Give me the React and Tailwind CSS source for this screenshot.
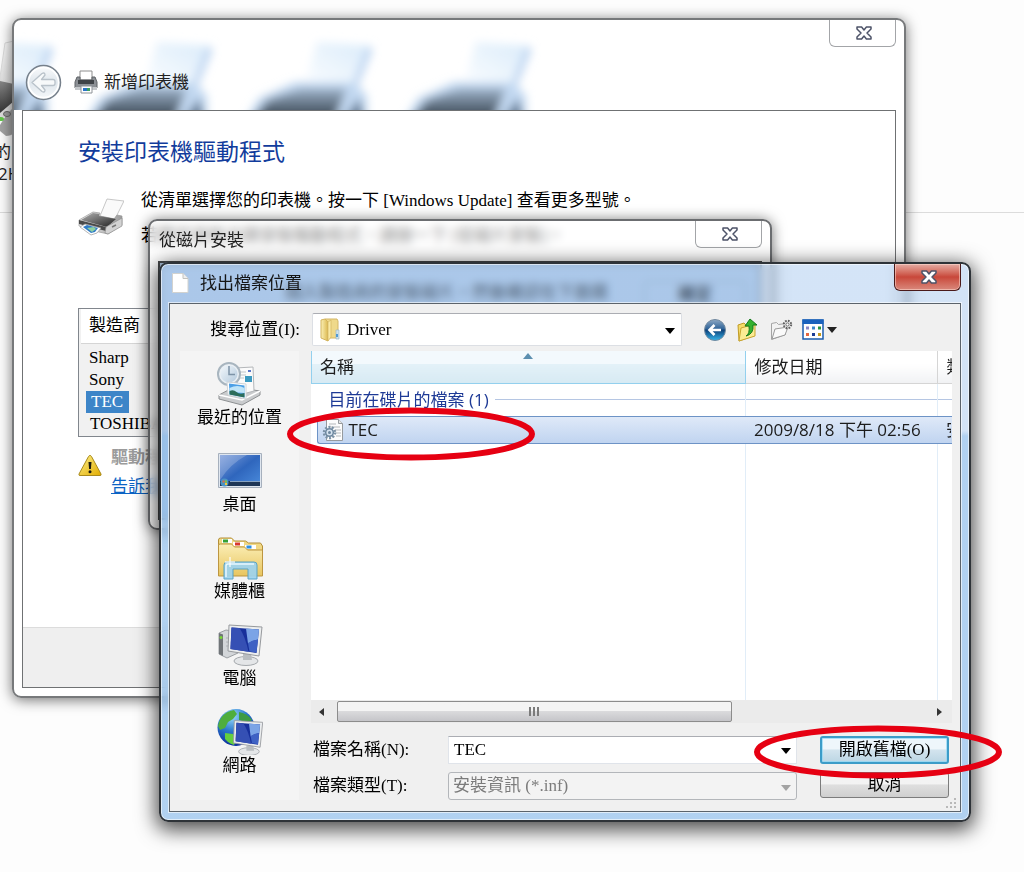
import React from 'react';

const serif = "font-['Liberation_Serif','Noto_Sans_CJK_TC',serif]";
const sans = "font-['Open_Sans','Noto_Sans_CJK_TC',sans-serif]";

function CloseGlyph({ tone = '#4d5368' }) {
  return (
    <svg width="18" height="16" viewBox="0 0 18 16" aria-hidden="true">
      <path
        d="M2 2h4.6L9 4.900 11.400 2H16v2L12 8l4 4v2h-4.600L9 11.100 6.600 14H2v-2l4-4-4-4z"
        fill="#fff"
        stroke={tone}
        strokeWidth="1.500"
        strokeLinejoin="round"
      />
    </svg>
  );
}

function CloseButton({ active }) {
  return (
    <button
      aria-label="關閉"
      className={
        active
          ? 'flex h-[27px] w-[67px] items-center justify-center rounded-b-md border border-t-0 border-[#4a1a1a] bg-linear-to-b from-[#e4aca4] from-0% via-[#c8473a] via-50% to-[#d9887c] pl-[2px] shadow-[inset_0_0_0_1px_rgba(255,220,210,0.55)]'
          : 'flex h-[27px] w-[67px] items-center justify-center rounded-b-md border border-t-0 border-[#a3a5a8] bg-white pl-[2px]'
      }
    >
      <CloseGlyph />
    </button>
  );
}

function DeskPrinter() {
  return (
    <svg width="14" height="100" viewBox="0 0 14 100" aria-hidden="true">
      <defs>
        <linearGradient id="dp1" x1="0" y1="0" x2="0" y2="1">
          <stop offset="0" stopColor="#888" />
          <stop offset="1" stopColor="#2f2f2f" />
        </linearGradient>
        <linearGradient id="dp2" x1="0" y1="0" x2="0" y2="1">
          <stop offset="0" stopColor="#fafafa" />
          <stop offset="1" stopColor="#dedede" />
        </linearGradient>
      </defs>
      <path d="M5 2l9-2v44H0V36z" fill="url(#dp2)" stroke="#dcdcdc" />
      <path d="M0 40l14 3v24L0 74z" fill="url(#dp1)" />
      <path d="M0 84l14-22v30q-3 3-8 3L0 90z" fill="#a2a2a2" />
      <path d="M0 72l14-12v6L0 80z" fill="#dcdcdc" />
      <ellipse cx="7" cy="73" rx="3.500" ry="2.500" fill="#9b9b9b" stroke="#666" />
      <ellipse cx="1" cy="78" rx="3" ry="2" fill="#63c64a" />
    </svg>
  );
}

function GlassPrinters() {
  return (
    <svg className="absolute inset-0 h-full w-full" aria-hidden="true">
      <defs>
        <filter id="soft" x="-30%" y="-30%" width="160%" height="160%">
          <feGaussianBlur stdDeviation="5" />
        </filter>
        <linearGradient id="gp" x1="0" y1="0" x2="0" y2="1">
          <stop offset="0" stopColor="#9fb4cb" />
          <stop offset="1" stopColor="#1f2a34" />
        </linearGradient>
        <linearGradient id="gpp" x1="1" y1="0" x2="0" y2="1">
          <stop offset="0" stopColor="#d9ebfa" />
          <stop offset="1" stopColor="#fbfdff" />
        </linearGradient>
        <g id="gprinter" filter="url(#soft)">
          <path d="M66 22L120 26L100 66L54 66z" fill="url(#gpp)" />
          <path d="M119 28L102 70" stroke="#aecbee" strokeWidth="5" />
          <path d="M-8 104L8 78L44 62H104L116 76V104z" fill="#c3d9f2" />
          <path d="M-2 104L16 80L50 68H96L82 104z" fill="url(#gp)" />
          <path d="M90 104L108 78L114 104z" fill="#5f7690" />
        </g>
      </defs>
      <use href="#gprinter" x="-82" y="0" />
      <use href="#gprinter" x="77" y="0" />
      <use href="#gprinter" x="237" y="0" />
      <use href="#gprinter" x="396" y="0" />
    </svg>
  );
}

function BackCircle() {
  return (
    <svg width="37" height="37" viewBox="0 0 37 37" aria-hidden="true">
      <defs>
        <linearGradient id="bc" x1="0" y1="0" x2="0" y2="1">
          <stop offset="0" stopColor="#fbfcfd" />
          <stop offset="0.5" stopColor="#dfe6ec" />
          <stop offset="1" stopColor="#f6f9fb" />
        </linearGradient>
      </defs>
      <circle cx="18.500" cy="18.500" r="17" fill="url(#bc)" stroke="#76808b" strokeWidth="1.500" />
      <circle cx="18.500" cy="18.500" r="15" fill="none" stroke="#fff" strokeWidth="1.500" />
      <path
        d="M7 18.500L17 9.500q3-1.500 3 1.500l-3.500 4.500H28q2 0 2 2v2q0 2-2 2H16.500l3.500 4.500q0 3-3 1.500z"
        fill="#f7f9fa"
        stroke="#b9c2ca"
        strokeWidth="1.300"
        strokeLinejoin="round"
      />
    </svg>
  );
}

function SmallPrinter() {
  return (
    <svg width="24" height="24" viewBox="0 0 24 24" aria-hidden="true">
      <path d="M6 1h12v9H6z" fill="#fff" stroke="#8d8d8d" />
      <path d="M3 7h3v3h12V7h3l2 5v6H1v-6z" fill="#8b8f94" stroke="#5e6266" />
      <path d="M4 10h16v4H4z" fill="#3f4347" />
      <path d="M1 17h22v3H1z" fill="#c5c8cb" />
      <path d="M7 16h11v7H7z" fill="#fff" stroke="#8d9298" />
      <path d="M9 18h4v3H9z" fill="#2a73c8" />
      <path d="M13 18h3v3h-3z" fill="#3b9f62" />
    </svg>
  );
}

function BigPrinter() {
  return (
    <svg width="46" height="38" viewBox="0 0 46 38" aria-hidden="true">
      <defs>
        <linearGradient id="bp1" x1="0" y1="0" x2="1" y2="1">
          <stop offset="0" stopColor="#b2b2b2" />
          <stop offset="1" stopColor="#1f1f1f" />
        </linearGradient>
        <linearGradient id="bp2" x1="0" y1="0" x2="1" y2="0">
          <stop offset="0" stopColor="#f2f2f2" />
          <stop offset="1" stopColor="#9b9b9b" />
        </linearGradient>
      </defs>
      <path d="M29 1l17 2-9 18-15-3z" fill="#fafafa" stroke="#b9b9b9" strokeWidth=".8" />
      <path d="M1 22l14-8 7 1-1 3 15 3 3-4 5 1v9L30 36l-9-2-20-6z" fill="url(#bp2)" stroke="#9a9a9a" strokeWidth=".7" />
      <path d="M3 22l12-7 6 1v2l17 3-9 8z" fill="url(#bp1)" />
      <path d="M1 22l27 7v4L1 26z" fill="#4a4a4a" />
      <path d="M28 29l16-9v8L30 36l-3-1z" fill="#d3d3d3" stroke="#8e8e8e" strokeWidth=".7" />
      <path d="M2 29l5-3 16 4-4 5-6 2z" fill="#fff" stroke="#999" strokeWidth=".7" />
      <path d="M5 29l4-2 11 3-3 4-4 1z" fill="#2f7bc6" />
      <path d="M9 30l7-1 2 2-4 3z" fill="#8ed0a0" />
      <path d="M34 29l4-2" stroke="#777" strokeWidth="1.500" />
    </svg>
  );
}

function WarningIcon() {
  return (
    <svg width="24" height="23" viewBox="0 0 24 23" aria-hidden="true">
      <defs>
        <linearGradient id="wi" x1="0" y1="0" x2="1" y2="1">
          <stop offset="0" stopColor="#fdf08b" />
          <stop offset="1" stopColor="#e2ac00" />
        </linearGradient>
      </defs>
      <path d="M12 1.500q1 0 1.500 1L23 20q.5 1.500-1 1.500H2Q.5 21.500 1 20L10.500 2.500q.5-1 1.500-1z" fill="url(#wi)" stroke="#a98a1c" />
      <path d="M10.500 8h3l-.6 7h-1.800z" fill="#1c1a10" />
      <circle cx="12" cy="17.800" r="1.500" fill="#1c1a10" />
    </svg>
  );
}

function RecentIcon() {
  return (
    <svg width="46" height="46" viewBox="0 0 46 46" aria-hidden="true">
      <defs>
        <linearGradient id="ri" x1="0" y1="0" x2="1" y2="1">
          <stop offset="0" stopColor="#f2f7fb" />
          <stop offset="1" stopColor="#b4cadd" />
        </linearGradient>
      </defs>
      <path d="M2 34l15-8 26 4v4L25 44 2 38z" fill="#c9cbcd" stroke="#8d9092" />
      <path d="M2 34l23 5 18-9" fill="none" stroke="#fff" strokeWidth="1.500" />
      <path d="M18 7l18-1 1 24-15 4z" fill="#fbfbfb" stroke="#b4b7ba" />
      <path d="M21 11h8M21 14h8M21 17h6" stroke="#c1c5ca" />
      <path d="M28 15h7v6h-7z" fill="#3c9ac0" />
      <path d="M31 9h3v2h-3z" fill="#5b76c8" />
      <circle cx="12" cy="13" r="11" fill="#e9eff4" stroke="#a8b5bf" strokeWidth="2" />
      <circle cx="12" cy="13" r="8.500" fill="url(#ri)" />
      <path d="M12 5v8.500h6" fill="none" stroke="#7d93a7" strokeWidth="1.500" />
      <path d="M10 21l19 2v15l-18-4z" fill="#fff" stroke="#cfd4d8" />
      <path d="M12 22.500l15.500 2v12l-15-3z" fill="#4c9fe6" />
      <path d="M12.500 27q8-4 15 0v5l-15-1z" fill="#bfe4f8" />
      <path d="M12.500 30q4-2 7 1t8 1v4.500l-15-3z" fill="#2d6d5a" />
    </svg>
  );
}

function DesktopIcon() {
  return (
    <svg width="46" height="46" viewBox="0 0 46 46" aria-hidden="true">
      <defs>
        <linearGradient id="di" x1="0" y1="0" x2="1" y2="1">
          <stop offset="0" stopColor="#7d9ddb" />
          <stop offset="0.5" stopColor="#2f66bd" />
          <stop offset="1" stopColor="#4a8bdc" />
        </linearGradient>
      </defs>
      <path d="M1.500 5.500h43v34h-43z" fill="#dfe6ef" stroke="#a6b0bd" />
      <path d="M3 7h40v31H3z" fill="url(#di)" />
      <path d="M3 7h27Q13 16 3 32z" fill="#fff" opacity=".2" />
      <path d="M3 33h40v5H3z" fill="#1e3656" />
      <path d="M13 33.500h30" stroke="#87a2c0" />
      <circle cx="7.500" cy="34.500" r="4" fill="#4b93c4" />
      <path d="M5.500 32.500h2v2h-2z" fill="#e9683b" />
      <path d="M8 32.500h2v2H8z" fill="#87c53e" />
      <path d="M8 35h2v2H8z" fill="#f3ca3e" />
    </svg>
  );
}

function LibraryIcon() {
  return (
    <svg width="46" height="46" viewBox="0 0 46 46" aria-hidden="true">
      <defs>
        <linearGradient id="li" x1="0" y1="0" x2="0" y2="1">
          <stop offset="0" stopColor="#fbeeb5" />
          <stop offset="1" stopColor="#e8c55f" />
        </linearGradient>
      </defs>
      <path d="M1.500 5q0-2 2-2h11l3 3h11l3 2h12l2 3v26h-44z" fill="#f1d884" stroke="#b48f38" />
      <path d="M5 4h10v4H5z" fill="#fff" />
      <path d="M6 4.500h5v3H6z" fill="#35a135" />
      <path d="M16 7h11v4H16z" fill="#fff" />
      <path d="M18 7.500h5v3h-5z" fill="#d83a2f" />
      <path d="M28 10h11v4H28z" fill="#fff" />
      <path d="M29.500 10.500h5v3h-5z" fill="#2e8fe0" />
      <path d="M1.500 10q0-1 2-1h11l3 3h10l3 3h15v26h-44z" fill="url(#li)" stroke="#bd9640" />
      <path d="M7 44V30q0-3 3-3h27q3 0 3 3v14h-9V34H16v10z" fill="#9ed3ee" stroke="#4f9fc9" opacity=".93" />
      <path d="M9 42V31q0-2 2-2h26" fill="none" stroke="#e8f8ff" strokeWidth="1.500" />
      <path d="M13 22v10M8 27h10" stroke="#fff" strokeWidth="1.500" opacity=".8" />
    </svg>
  );
}

function Monitor() {
  return (
    <g>
      <ellipse cx="29" cy="39" rx="12" ry="4.500" fill="#e4e6e8" stroke="#a5a9ad" />
      <path d="M26 32h8l1 6h-9z" fill="#b9bdc1" />
      <path d="M12 3l33 2-3 29-31-5z" fill="#eceeef" stroke="#96999d" />
      <path d="M14.500 5.500l27.500 2-2.500 23.500-26-4z" fill="#17309b" />
      <path d="M14.500 5.500l8 .6q6 9 9 23.700l-18-2.800z" fill="#3550b4" />
      <path d="M29 6.500l13 1-1 10q-6 1-10 4z" fill="#7ba4e6" />
      <path d="M31 21q4-3 10-3.500l-1.500 13-7-1z" fill="#3f62c4" />
    </g>
  );
}

function ComputerIcon() {
  return (
    <svg width="46" height="46" viewBox="0 0 46 46" aria-hidden="true">
      <path d="M2 11l7-3 12 2v21l-11 5-8-4z" fill="#d3d6d9" stroke="#9b9fa3" />
      <path d="M2 11l4 1.500V34l-4-2z" fill="#707478" />
      <circle cx="4" cy="15.500" r="1.500" fill="#78d637" />
      <path d="M9 16h5M9 20h4M9 24h4" stroke="#aeb2b6" />
      <Monitor />
    </svg>
  );
}

function NetworkIcon() {
  return (
    <svg width="46" height="46" viewBox="0 0 46 46" aria-hidden="true">
      <defs>
        <radialGradient id="ni" cx=".4" cy=".2" r=".8">
          <stop offset="0" stopColor="#9adcfc" />
          <stop offset="0.5" stopColor="#2a77cd" />
          <stop offset="1" stopColor="#0c2d9b" />
        </radialGradient>
      </defs>
      <circle cx="19" cy="18.500" r="18.500" fill="url(#ni)" />
      <path d="M4 9Q9 2 17 1l3 4-4 5-5 3-3 6-5 2-2-4q1-5 3-8z" fill="#4fae3d" />
      <path d="M8 24l8 1 4 5-3 6q-6-2-9-6z" fill="#64cf3e" />
      <path d="M22 3q8 1 13 8l-5 3-8-3z" fill="#3f9b45" />
      <g transform="translate(7 9) scale(.86)">
        <Monitor />
      </g>
    </svg>
  );
}

function PageIcon() {
  return (
    <svg width="18" height="20" viewBox="0 0 18 20" aria-hidden="true">
      <path d="M1.500.5h10.500l5 5v14h-15.500z" fill="#fff" stroke="#d2d2cf" />
      <path d="M12 .5v5h5" fill="#eee" stroke="#c2c2be" />
    </svg>
  );
}

function FolderIcon() {
  return (
    <svg width="20" height="24" viewBox="0 0 20 24" aria-hidden="true">
      <defs>
        <linearGradient id="fo" x1="0" y1="0" x2="1" y2="0">
          <stop offset="0" stopColor="#fbf0b4" />
          <stop offset="1" stopColor="#dcb950" />
        </linearGradient>
      </defs>
      <path d="M5 1h12l1 2v17H5z" fill="#efd98a" stroke="#d3b667" />
      <path d="M16 12h3v9h-3z" fill="#cfe3ee" stroke="#9bb9c9" strokeWidth=".7" />
      <path d="M16 16h2v3h-2z" fill="#4f9bd5" />
      <path d="M1 2l4-1 3 3v19l-7-3z" fill="url(#fo)" stroke="#d3b45e" />
      <path d="M8 4l3-2v17l-3 4z" fill="#f9e9a4" stroke="#d3b45e" strokeWidth=".7" />
    </svg>
  );
}

function InfIcon() {
  return (
    <svg width="22" height="24" viewBox="0 0 22 24" aria-hidden="true">
      <path d="M4.500 1.500h12l4 4v17h-16z" fill="#fcfcfc" stroke="#969a9e" />
      <path d="M16.500 1.500v4h4" fill="#e6e6e6" stroke="#969a9e" />
      <path d="M7 6h7M7 9h11M13 12h6M14 15h5M14 18h5" stroke="#b5b8bb" />
      <circle cx="7.500" cy="14.500" r="5.500" fill="none" stroke="#7b91a5" strokeWidth="2.500" strokeDasharray="2 1.450" />
      <circle cx="7.500" cy="14.500" r="3.800" fill="#d6e3ef" stroke="#6c869e" strokeWidth="1.500" />
      <circle cx="7.500" cy="14.500" r="1.500" fill="#6c869e" />
    </svg>
  );
}

function BackNavIcon() {
  return (
    <svg width="24" height="24" viewBox="0 0 24 24" aria-hidden="true">
      <defs>
        <linearGradient id="bn" x1="0" y1="0" x2="0" y2="1">
          <stop offset="0" stopColor="#8ea9c4" />
          <stop offset="0.45" stopColor="#2f6398" />
          <stop offset="0.5" stopColor="#0d4079" />
          <stop offset="1" stopColor="#35b5ea" />
        </linearGradient>
      </defs>
      <circle cx="12" cy="12" r="10.500" fill="url(#bn)" stroke="#71899f" />
      <path d="M11.500 7L6.500 12l5 5M7 12h11" fill="none" stroke="#fff" strokeWidth="2.600" />
    </svg>
  );
}

function UpFolderIcon() {
  return (
    <svg width="24" height="24" viewBox="0 0 24 24" aria-hidden="true">
      <path d="M2 7l6-2 2 2 7-2v13L3 23z" fill="#f5dc6a" stroke="#c19b25" />
      <path d="M5 10l14-4v12L3 23z" fill="#fbeb93" stroke="#c8a531" />
      <path d="M10 18q4-2 3-10H9l5-7 7 6h-4q1 9-7 11z" fill="#35b22f" stroke="#157a1c" strokeLinejoin="round" />
    </svg>
  );
}

function NewFolderIcon() {
  return (
    <svg width="24" height="24" viewBox="0 0 24 24" aria-hidden="true">
      <path d="M2.500 5.500l5-1 2 2 7-1v11l-14 5z" fill="#f2f2f2" stroke="#a4a4a4" />
      <path d="M6 11l13-2-3 8-13 4z" fill="#fafafa" stroke="#9a9a9a" strokeLinejoin="round" />
      <circle cx="18.500" cy="6.500" r="3.700" fill="#f0f0f0" stroke="#5f5f5f" strokeWidth="2" strokeDasharray="1.700 1.200" />
      <circle cx="18.500" cy="6.500" r="1.600" fill="#fff" stroke="#6b6b6b" />
    </svg>
  );
}

function ViewsIcon() {
  return (
    <svg width="22" height="22" viewBox="0 0 22 22" aria-hidden="true">
      <path d="M1 1h20v19H1z" fill="#fff" stroke="#1a5cae" strokeWidth="1.500" />
      <path d="M.5.500h21V5H.5z" fill="#1a62bd" />
      <path d="M4 7.500h3v3H4z" fill="#8b87c6" />
      <path d="M10 7.500h3v3h-3z" fill="#3a87c8" />
      <path d="M16 7.500h3v3h-3z" fill="#25953e" />
      <path d="M4 14h3v3H4z" fill="#e5663e" />
      <path d="M10 14h3v3h-3z" fill="#1c3d94" />
      <path d="M16 14h3v3h-3z" fill="#c79b1c" />
    </svg>
  );
}

function Caret({ className }) {
  return (
    <svg width="10" height="6" viewBox="0 0 10 6" className={className} aria-hidden="true">
      <path d="M0 0h10L5 6z" fill="currentColor" />
    </svg>
  );
}

function AddPrinterWindow() {
  return (
    <section className="absolute left-[12px] top-[18px] flex h-[680px] w-[894px] flex-col rounded-[9px] border-2 border-[#77797b] bg-white/95 px-[8px] pb-[8px] shadow-[0_2px_14px_rgba(0,0,0,0.55)]">
      <header className="relative -mx-[8px] flex h-[90px] shrink-0 items-start overflow-hidden rounded-t-[7px] pl-[11px] pr-[8px]">
        <GlassPrinters />
        <button aria-label="上一頁" className="relative mt-[44px]">
          <BackCircle />
        </button>
        <h1 className={`relative ml-[12px] mt-[50px] flex items-center gap-[6px] text-[17px] leading-[24px] text-[#222] ${sans}`}>
          <SmallPrinter />
          新增印表機
        </h1>
        <div className="relative ml-auto">
          <CloseButton />
        </div>
      </header>
      <div className="flex min-h-0 flex-1 flex-col border border-[#6f7173] bg-white">
        <div className="flex-1 px-[55px] pt-[24px]">
          <h2 className={`text-[23px] leading-[32px] text-[#123c9c] ${sans}`}>安裝印表機驅動程式</h2>
          <div className="mt-[22px] flex gap-[17px]">
            <div className="pt-[9px]">
              <BigPrinter />
            </div>
            <div className={`text-[17px] leading-[24px] text-black ${serif}`}>
              <p>從清單選擇您的印表機。按一下 [Windows Update] 查看更多型號。</p>
              <p className="mt-[11px]">若要從安裝光碟安裝驅動程式，請按一下 [從磁片安裝]。</p>
            </div>
          </div>
          <div className={`mt-[60px] w-[300px] border border-[#81868d] bg-[#f1f1f1] px-[2px] pb-px text-[17px] leading-[22px] text-black ${serif}`}>
            <div className="border-b border-[#d5d5d5] bg-white px-[8px] py-[5px] leading-[24px]">製造商</div>
            <ul className="pt-[3px]">
              <li className="px-[8px]">Sharp</li>
              <li className="px-[8px]">Sony</li>
              <li className="ml-[5px] w-[43px] bg-[#3d85c8] pl-[5px] text-white">TEC</li>
              <li className="px-[9px]">TOSHIBA</li>
            </ul>
          </div>
          <div className={`mt-[10px] flex gap-[9px] text-[17px] ${serif}`}>
            <div className="pt-[7px]">
              <WarningIcon />
            </div>
            <div>
              <p className="font-bold leading-[22px] text-[#9b9b9b]">驅動程式沒有數位簽章</p>
              <a href="#signing" className="mt-[6px] block leading-[24px] text-[#0b63c4] underline">
                告訴我為什麼驅動程式簽章很重要
              </a>
            </div>
          </div>
        </div>
        <footer className="h-[60px] border-t border-[#dcdcdc] bg-[#efefef]" />
      </div>
    </section>
  );
}

function DiskWindow() {
  return (
    <section className="absolute left-[148px] top-[219px] flex h-[311px] w-[624px] flex-col rounded-[9px] border-2 border-[#6b6d70] bg-white/50 px-[8px] pb-[8px] shadow-[0_1px_14px_rgba(0,0,0,0.55)] backdrop-blur-[5px]">
      <header className="flex h-[40px] shrink-0 items-start justify-between pl-px">
        <h2 className={`pt-[7px] text-[17px] leading-[24px] text-[#222] ${sans}`}>從磁片安裝</h2>
        <CloseButton />
      </header>
      <div className={`flex flex-1 justify-between border-2 border-[#47494b] bg-[#b4cbe6] pl-[125px] pr-[14px] pt-[18px] text-[17px] leading-[24px] text-black ${serif}`}>
        <p>插入製造商的安裝磁片，然後確認在下面選</p>
        <button className="h-[28px] w-[102px] rounded-[3px] border border-[#8a97a8] font-bold">確定</button>
      </div>
    </section>
  );
}

const places = [
  { name: '最近的位置', Icon: RecentIcon },
  { name: '桌面', Icon: DesktopIcon },
  { name: '媒體櫃', Icon: LibraryIcon },
  { name: '電腦', Icon: ComputerIcon },
  { name: '網路', Icon: NetworkIcon },
];

function PlacesBar() {
  return (
    <nav className="w-[119px] shrink-0 bg-[#f4f4f4] pb-[22px] pt-[10px]">
      <ul className="flex flex-col gap-[21px]">
        {places.map(({ name, Icon }) => (
          <li key={name}>
            <button className={`flex w-full flex-col items-center text-[17px] leading-[20px] text-black ${sans}`}>
              <Icon />
              {name}
            </button>
          </li>
        ))}
      </ul>
    </nav>
  );
}

function FileList() {
  return (
    <div className="flex min-h-0 flex-1 flex-col bg-white">
      <table className={`h-full w-full table-fixed border-collapse text-left text-[17px] text-[#1c1c1c] ${sans}`}>
        <colgroup>
          <col />
          <col className="w-[192px]" />
          <col className="w-[15px]" />
        </colgroup>
        <thead>
          <tr className="h-[32px]">
            <th className="relative border-b border-l border-r border-[#93d0ee] bg-linear-to-b from-[#f3f9fd] from-40% via-[#e3f1f8] via-41% to-[#d7eaf3] pl-[8px] font-normal">
              名稱
              <svg width="10" height="6" viewBox="0 0 10 6" className="absolute left-1/2 top-[2px] -translate-x-1/2" aria-hidden="true">
                <path d="M0 6h10L5 0z" fill="#5c8fb0" />
              </svg>
            </th>
            <th className="border-b border-r border-[#d5d5d5] bg-linear-to-b from-white from-40% to-[#f1f2f4] pl-[9px] font-normal">修改日期</th>
            <th className="overflow-hidden whitespace-nowrap border-b border-[#d5d5d5] bg-linear-to-b from-white from-40% to-[#f1f2f4] p-0 font-normal">
              <div className="ml-[9px] w-[5px] overflow-hidden">類型</div>
            </th>
          </tr>
        </thead>
        <tbody>
          <tr className="h-[33px]">
            <td className="border-r border-[#e1edf8] p-0 pl-[17px]">
              <div className="flex items-center gap-[6px] whitespace-nowrap leading-[24px] text-[#1e3a96]">
                目前在碟片的檔案 (1)
                <span className="h-px flex-1 bg-[#b5c6e3]" />
              </div>
            </td>
            <td className="border-r border-[#e1edf8] p-0">
              <div className="h-px bg-[#b5c6e3]" />
            </td>
            <td className="p-0">
              <div className="h-px bg-[#b5c6e3]" />
            </td>
          </tr>
          <tr className="h-[28px]">
            <td className="p-0 pl-[5px]">
              <div className="flex h-[28px] items-center gap-[5px] rounded-l-[3px] border-y border-l border-[#6d93c6] bg-linear-to-b from-[#dfe9f8] to-[#c0d4f0] pl-[4px]">
                <InfIcon />
                TEC
              </div>
            </td>
            <td className="p-0">
              <div className="flex h-[28px] items-center whitespace-nowrap border-y border-[#6d93c6] bg-linear-to-b from-[#dfe9f8] to-[#c0d4f0] pl-[9px]">
                2009/8/18 下午 02:56
              </div>
            </td>
            <td className="p-0">
              <div className="flex h-[28px] items-center border-y border-[#6d93c6] bg-linear-to-b from-[#dfe9f8] to-[#c0d4f0] pl-[9px]">
                <span className="w-[5px] overflow-hidden whitespace-nowrap">安裝資訊</span>
              </div>
            </td>
          </tr>
          <tr>
            <td className="border-r border-[#e1edf8]" />
            <td className="border-r border-[#e1edf8]" />
            <td />
          </tr>
        </tbody>
      </table>
    </div>
  );
}

function ScrollBar() {
  return (
    <div className="flex h-[23px] shrink-0 items-stretch bg-[#ebebeb]">
      <button aria-label="向左捲動" className="flex w-[26px] items-center justify-center pr-[4px]">
        <svg width="6" height="8" viewBox="0 0 6 8" aria-hidden="true">
          <path d="M5 0v8L0 4z" fill="#333" />
        </svg>
      </button>
      <div className="flex flex-1 py-px">
        <div className="flex w-[67%] items-center justify-center gap-[2px] rounded-[2px] border border-[#8c8c8c] bg-linear-to-b from-[#f4f4f4] from-45% via-[#dadadc] via-50% to-[#c5c5c9]">
          <span className="h-[9px] w-[2px] bg-[#7b7b7b]" />
          <span className="h-[9px] w-[2px] bg-[#7b7b7b]" />
          <span className="h-[9px] w-[2px] bg-[#7b7b7b]" />
        </div>
      </div>
      <button aria-label="向右捲動" className="flex w-[26px] items-center justify-center">
        <svg width="6" height="8" viewBox="0 0 6 8" aria-hidden="true">
          <path d="M1 0v8l5-4z" fill="#333" />
        </svg>
      </button>
    </div>
  );
}

function FileDialog() {
  return (
    <section className="absolute left-[159px] top-[262px] flex h-[560px] w-[812px] flex-col rounded-[9px] border-2 border-[#2e3338] bg-linear-to-b from-[#a0c4ee]/45 from-30% to-[#8fbdea]/70 to-31% px-[8px] pb-[8px] shadow-[0_5px_20px_3px_rgba(0,0,0,0.7),inset_0_0_0_1px_rgba(255,255,255,0.6)] backdrop-blur-[4px]">
      <header className="flex h-[39px] shrink-0 items-start justify-between pl-[2px]">
        <h2 className={`flex items-center gap-[11px] pt-[7px] text-[17px] leading-[24px] text-[#151515] ${sans}`}>
          <PageIcon />
          找出檔案位置
        </h2>
        <CloseButton active />
      </header>
      <div className="relative flex min-h-0 flex-1 flex-col border border-[#5b636b] bg-[#f0f0f0] pb-[11px] pl-[10px] pr-[8px] pt-[9px] shadow-[0_0_0_1px_rgba(255,255,255,0.6)]">
        <div className={`flex items-center text-[17px] ${serif}`}>
          <label htmlFor="look-in" className="w-[120px] shrink-0 text-right text-black">
            搜尋位置(I):
          </label>
          <div className="relative ml-[12px] w-[370px]">
            <select id="look-in" className="h-[33px] w-full appearance-none rounded-[2px] border border-[#dcdfe4] border-t-[#abadb3] bg-white pl-[34px] text-black">
              <option>Driver</option>
            </select>
            <div className="pointer-events-none absolute left-[8px] top-[5px]">
              <FolderIcon />
            </div>
            <Caret className="pointer-events-none absolute right-[7px] top-[15px] text-black" />
          </div>
          <div className="ml-[21px] flex items-center gap-[9px]">
            <button aria-label="返回">
              <BackNavIcon />
            </button>
            <button aria-label="上移一層">
              <UpFolderIcon />
            </button>
            <button aria-label="建立新資料夾">
              <NewFolderIcon />
            </button>
            <button aria-label="檢視功能表" className="flex items-center gap-[3px]">
              <ViewsIcon />
              <Caret className="text-[#222]" />
            </button>
          </div>
        </div>
        <div className="mt-[5px] flex min-h-0 flex-1 gap-[12px]">
          <PlacesBar />
          <div className="flex min-w-0 flex-1 flex-col">
            <FileList />
            <ScrollBar />
            <form className={`mt-[13px] grid grid-cols-[135px_1fr_129px] gap-y-[8px] pl-[2px] pr-[3px] text-[17px] text-black ${serif}`}>
              <label htmlFor="file-name" className="self-center leading-[28px]">
                檔案名稱(N):
              </label>
              <div className="relative mr-[23px]">
                <input id="file-name" defaultValue="TEC" className="h-[28px] w-full border border-[#e0e4ea] border-t-[#abadb3] bg-white pl-[5px] pr-[28px]" />
                <button type="button" aria-label="檔案名稱清單" className="absolute right-[6px] top-[12px]">
                  <Caret />
                </button>
              </div>
              <button type="button" className="h-[28px] rounded-[3px] border-2 border-[#3c9cc8] bg-linear-to-b from-[#eef6fb] from-45% via-[#d3e4ee] via-50% to-[#bcd6e4] leading-[22px] shadow-[inset_0_0_0_1px_rgba(140,215,245,0.7)]">
                開啟舊檔(O)
              </button>
              <label htmlFor="file-type" className="self-center leading-[28px]">
                檔案類型(T):
              </label>
              <div className="relative mr-[23px]">
                <select id="file-type" disabled className="h-[28px] w-full appearance-none rounded-[3px] border border-[#b3b6ba] bg-[#f3f3f3] pl-[4px] text-[#7b7b7b] opacity-100">
                  <option>安裝資訊 (*.inf)</option>
                </select>
                <Caret className="pointer-events-none absolute right-[6px] top-[13px] text-[#a3a3a3]" />
              </div>
              <button type="button" className="h-[26px] rounded-[3px] border border-[#7c7c7c] bg-linear-to-b from-[#f3f3f3] from-45% via-[#dfdfdf] via-50% to-[#cfcfcf] leading-[22px]">
                取消
              </button>
            </form>
          </div>
        </div>
        <svg width="12" height="12" viewBox="0 0 12 12" className="absolute bottom-[2px] right-[3px]" aria-hidden="true">
          <path d="M9 1h2v2H9zM5 5h2v2H5zM9 5h2v2H9zM1 9h2v2H1zM5 9h2v2H5zM9 9h2v2H9z" fill="#b9b9b9" />
        </svg>
      </div>
    </section>
  );
}

function Marker({ className }) {
  return (
    <svg width="250" height="54" viewBox="0 0 250 54" className={`pointer-events-none absolute ${className}`} aria-hidden="true">
      <ellipse cx="125" cy="27" rx="121" ry="23.500" fill="none" stroke="#e60012" strokeWidth="6" />
    </svg>
  );
}

export default function App() {
  return (
    <main className="relative min-h-screen overflow-hidden bg-[#fdfdfd]">
      <div className="absolute inset-x-0 top-[212px] h-px bg-[#dcdcdc]" />
      <div className={`absolute left-0 top-[41px] w-[14px] overflow-hidden whitespace-nowrap text-[17px] leading-[22px] text-[#222] ${sans}`}>
        <DeskPrinter />
        <div className="-ml-[6px]">的</div>
        <div className="-ml-[2px]">2H</div>
      </div>
      <AddPrinterWindow />
      <DiskWindow />
      <FileDialog />
      <Marker className="left-[286px] top-[407px]" />
      <Marker className="left-[753px] top-[725px]" />
    </main>
  );
}
